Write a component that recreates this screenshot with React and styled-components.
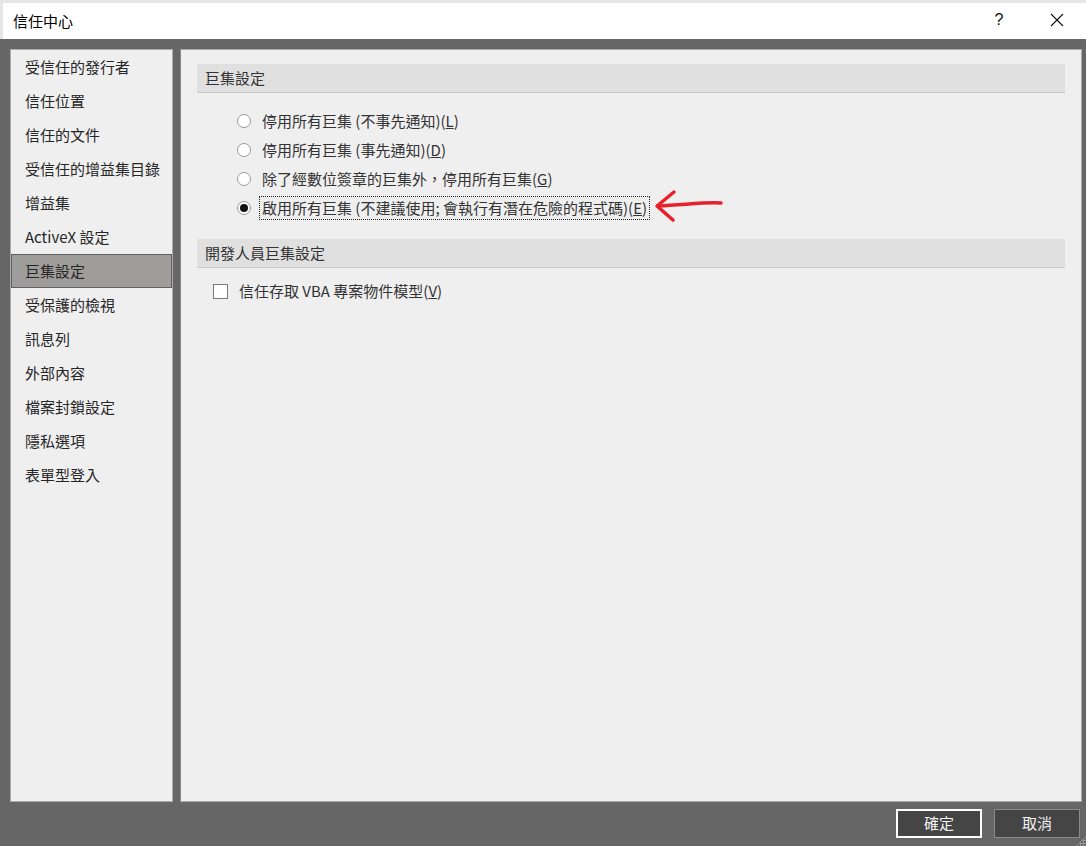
import React from 'react';
import styled, { createGlobalStyle } from 'styled-components';

const GlobalStyle = createGlobalStyle`
  html, body {
    margin: 0;
    padding: 0;
    background: #666666;
  }
  body {
    font-family: "Noto Sans CJK TC", "Noto Sans", "Liberation Sans", sans-serif;
    font-size: 15px;
    color: #262626;
  }
`;

const Backdrop = styled.div`
  width: 1086px;
  height: 846px;
  padding-top: 3px;
  box-sizing: border-box;
  background: #e6e6e6;
  display: flex;
  flex-direction: column;
`;

const Window = styled.div`
  flex: 1;
  display: flex;
  flex-direction: column;
  margin-left: 3px;
  position: relative;
`;

const TitleBar = styled.div`
  height: 36px;
  background: #ffffff;
  display: flex;
  align-items: center;
  padding: 0 0 2px 10px;
  box-sizing: border-box;
  font-size: 15px;
  line-height: 1;
  color: #000;
`;

const Title = styled.span`
  flex: 1;
`;

const TitleButton = styled.span`
  width: 58px;
  text-align: center;
  font-size: 16px;
  font-family: "Liberation Sans", sans-serif;
  color: #111;
`;

const Body = styled.div`
  flex: 1;
  background: #666666;
  display: flex;
  flex-direction: column;
  margin-left: -3px;
  padding: 10px 4px 0 10px;
`;

const Main = styled.div`
  flex: 1;
  display: flex;
  gap: 7px;
`;

const Nav = styled.div`
  width: 163px;
  box-sizing: border-box;
  background: #efefef;
  border: 1px solid #aaaaaa;
  display: flex;
  flex-direction: column;
`;

const NavItem = styled.div`
  height: 34px;
  box-sizing: border-box;
  display: flex;
  align-items: center;
  padding: 0 0 2px 13px;
  line-height: 1;
  color: #262626;
  background: ${p => p.$active ? '#9f9d9b' : 'transparent'};
  border: 1px solid ${p => p.$active ? '#606060' : 'transparent'};
`;

const Content = styled.div`
  flex: 1;
  background: #efefef;
  border: 1px solid #aaaaaa;
  border-left-color: #888;
  padding: 14px 16px 0 16px;
  display: flex;
  flex-direction: column;
`;

const SectionHeader = styled.div`
  height: 29px;
  box-sizing: border-box;
  background: #e0e0e0;
  border-bottom: 1px solid #cacaca;
  display: flex;
  align-items: center;
  padding: 0 0 2px 8px;
  line-height: 1;
  color: #333;
`;

const OptionList = styled.div`
  display: flex;
  flex-direction: column;
  padding: 13px 0 17px 40px;
`;

const OptionRow = styled.div`
  height: 29px;
  display: flex;
  align-items: center;
  gap: 11px;
  line-height: 1;
`;

const Radio = styled.span`
  width: 14px;
  height: 14px;
  margin-top: 1px;
  box-sizing: border-box;
  border-radius: 50%;
  border: 1px solid #999;
  background: #fff;
  display: flex;
  align-items: center;
  justify-content: center;
  &::after {
    content: '';
    width: 8px;
    height: 8px;
    border-radius: 50%;
    background: ${p => p.$checked ? '#111' : 'transparent'};
  }
`;

const Label = styled.span`
  padding: 3px 2px 4px;
  margin-left: -3px;
  border: 1px dotted ${p => p.$focus ? '#222' : 'transparent'};
  color: #333;
  white-space: nowrap;
`;

const Key = styled.span`
  text-decoration: underline;
`;

const Arrow = styled.svg`
  margin-left: -7px;
  margin-top: -4px;
`;

const CheckList = styled.div`
  padding: 8px 0 0 16px;
`;

const Checkbox = styled.span`
  width: 15px;
  height: 15px;
  margin-top: 1px;
  box-sizing: border-box;
  border: 1px solid #7a7a7a;
  background: #fff;
`;

const Footer = styled.div`
  height: 44px;
  display: flex;
  justify-content: flex-end;
  align-items: flex-start;
  gap: 12px;
  padding: 7px 2px 0 0;
  box-sizing: border-box;
`;

const Button = styled.button`
  width: 86px;
  height: 29px;
  box-sizing: border-box;
  background: #454545;
  color: #f2f2f2;
  border: ${p => p.$primary ? '2px solid #ffffff' : '1px solid #8a8a8a'};
  font-family: inherit;
  font-size: 15px;
  line-height: 1;
  padding: 0 0 2px;
`;

const Grip = styled.div`
  position: absolute;
  right: 0;
  bottom: 0;
  width: 10px;
  height: 10px;
  background-image: radial-gradient(#9a9a9a 1px, transparent 1.2px);
  background-size: 3px 3px;
  clip-path: polygon(100% 0, 100% 100%, 0 100%);
`;

const navItems = [
  '受信任的發行者', '信任位置', '信任的文件', '受信任的增益集目錄', '增益集',
  'ActiveX 設定', '巨集設定', '受保護的檢視', '訊息列', '外部內容',
  '檔案封鎖設定', '隱私選項', '表單型登入',
];

const options = [
  { text: '停用所有巨集 (不事先通知)', key: 'L' },
  { text: '停用所有巨集 (事先通知)', key: 'D' },
  { text: '除了經數位簽章的巨集外，停用所有巨集', key: 'G' },
  { text: '啟用所有巨集 (不建議使用; 會執行有潛在危險的程式碼)', key: 'E', checked: true },
];

export default function App() {
  return (
    <>
      <GlobalStyle />
      <Backdrop>
        <Window>
          <TitleBar>
            <Title>信任中心</Title>
            <TitleButton>?</TitleButton>
            <TitleButton>
              <svg width="14" height="14" viewBox="0 0 14 14" style={{ display: 'block', margin: '0 auto' }}>
                <path d="M1 1 L13 13 M13 1 L1 13" stroke="#111" strokeWidth="1.1" />
              </svg>
            </TitleButton>
          </TitleBar>
          <Body>
            <Main>
              <Nav>
                {navItems.map(item => (
                  <NavItem key={item} $active={item === '巨集設定'}>{item}</NavItem>
                ))}
              </Nav>
              <Content>
                <SectionHeader>巨集設定</SectionHeader>
                <OptionList>
                  {options.map(o => (
                    <OptionRow key={o.key}>
                      <Radio $checked={o.checked} />
                      <Label $focus={o.checked}>
                        {o.text}(<Key>{o.key}</Key>)
                      </Label>
                      {o.checked && (
                        <Arrow width="70" height="34" viewBox="0 0 70 34">
                          <path d="M67 14 C50 13 30 16 4 17" stroke="#e8202a" strokeWidth="3.5" fill="none" strokeLinecap="round" />
                          <path d="M20 3 L3 17 L19 31" stroke="#e8202a" strokeWidth="3.5" fill="none" strokeLinecap="round" strokeLinejoin="round" />
                        </Arrow>
                      )}
                    </OptionRow>
                  ))}
                </OptionList>
                <SectionHeader>開發人員巨集設定</SectionHeader>
                <CheckList>
                  <OptionRow>
                    <Checkbox />
                    <Label>信任存取 VBA 專案物件模型(<Key>V</Key>)</Label>
                  </OptionRow>
                </CheckList>
              </Content>
            </Main>
            <Footer>
              <Button $primary>確定</Button>
              <Button>取消</Button>
            </Footer>
          </Body>
          <Grip />
        </Window>
      </Backdrop>
    </>
  );
}
